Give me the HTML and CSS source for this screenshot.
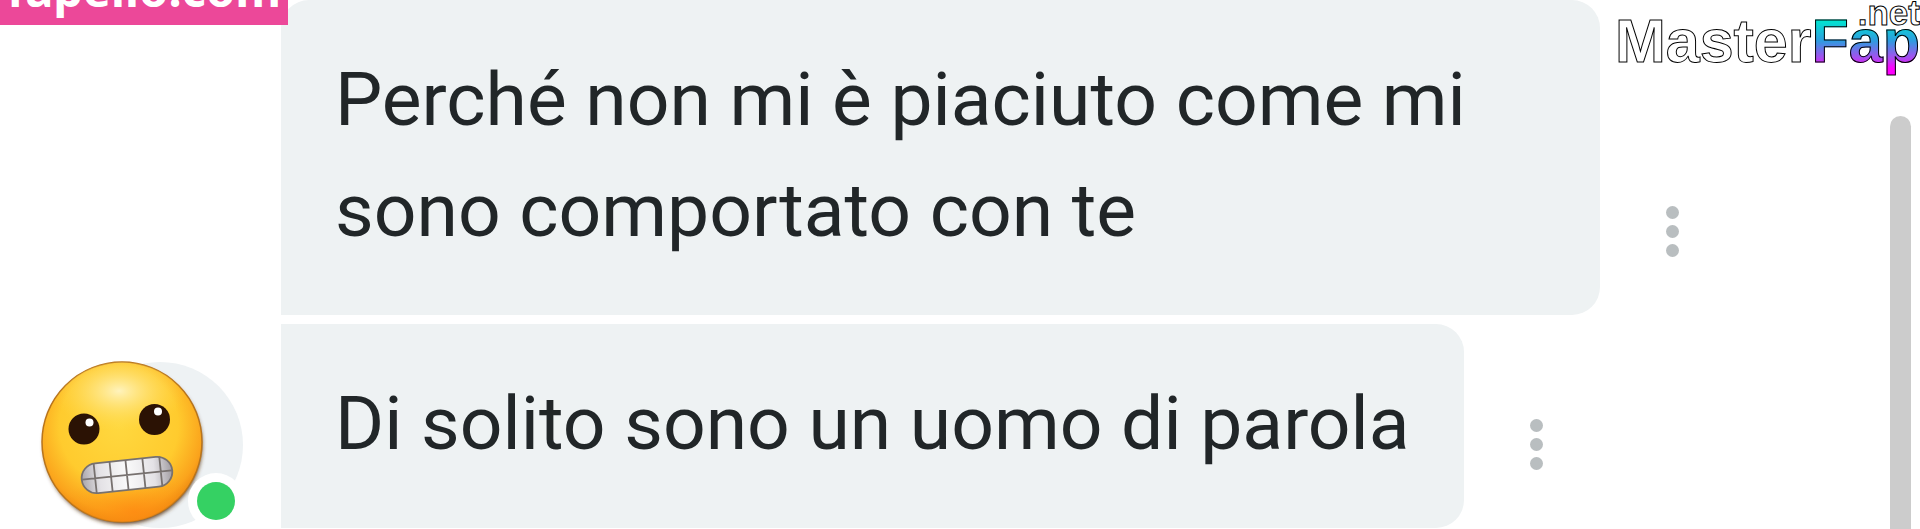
FILE: index.html
```html
<!DOCTYPE html>
<html lang="it">
<head>
  <meta charset="UTF-8">
  <title>Chat</title>
  <link rel="stylesheet" href="styles.css">
</head>
<body>
  <main class="chat">
    <div class="conversation">
      <div class="avatar">
        <svg viewBox="36 353 212 174" width="212" height="174" role="img" aria-label="Online">
          <defs>
            <radialGradient id="face" cx="0.48" cy="0.4" r="0.62">
              <stop offset="0" stop-color="#ffd83f"/>
              <stop offset="0.6" stop-color="#ffcb2e"/>
              <stop offset="0.85" stop-color="#fba41c"/>
              <stop offset="1" stop-color="#e87c0c"/>
            </radialGradient>
            <radialGradient id="shine">
              <stop offset="0" stop-color="#fff3bd"/>
              <stop offset="1" stop-color="#ffdc50" stop-opacity="0"/>
            </radialGradient>
            <radialGradient id="glow">
              <stop offset="0" stop-color="#ff8a12" stop-opacity="0.8"/>
              <stop offset="1" stop-color="#ff9a12" stop-opacity="0"/>
            </radialGradient>
            <linearGradient id="teeth">
              <stop offset="0" stop-color="#aaa6ab"/>
              <stop offset="0.2" stop-color="#e4e2e6"/>
              <stop offset="0.5" stop-color="#fafafa"/>
              <stop offset="0.8" stop-color="#e4e2e6"/>
              <stop offset="1" stop-color="#a19da2"/>
            </linearGradient>
            <filter id="soft" x="-20%" y="-20%" width="140%" height="140%">
              <feGaussianBlur stdDeviation="2"/>
            </filter>
            <clipPath id="head"><circle cx="122" cy="441" r="80"/></clipPath>
          </defs>
          <circle cx="160" cy="444" r="83" fill="#eef2f4"/>
          <circle cx="123" cy="444" r="79" fill="#5b3a1c" filter="url(#soft)"/>
          <circle cx="122" cy="441" r="80" fill="url(#face)" stroke="#b8741c" stroke-width="1.5"/>
          <g clip-path="url(#head)">
            <ellipse cx="134" cy="511" rx="75" ry="38" fill="url(#glow)"/>
            <ellipse cx="119" cy="390" rx="66" ry="40" fill="url(#shine)"/>
          </g>
          <g fill="#2b1204">
            <circle cx="84" cy="428" r="15.5"/>
            <circle cx="154.500" cy="418.500" r="15.5"/>
          </g>
          <g fill="#fff">
            <circle cx="89.500" cy="421.500" r="4"/>
            <circle cx="158" cy="410.500" r="4"/>
          </g>
          <!-- clenched teeth -->
          <g transform="rotate(-6 127 474)" stroke="#77716f" stroke-width="1.8">
            <rect x="81.500" y="459" width="91" height="30" rx="15" fill="url(#teeth)"/>
            <path d="M82 474H172M95 459V489M111 459V489M127 459V489M144 459V489M161 459V489" fill="none"/>
          </g>
          <circle cx="216" cy="500" r="28" fill="#fff"/>
          <circle cx="216" cy="500" r="19" fill="#35d163"/>
        </svg>
      </div>

      <div class="messages">
        <div class="message">
          <p class="bubble bubble-first">Perché non mi è piaciuto come mi sono comportato con te</p>
          <button type="button" class="more" aria-label="Altro">
            <span class="dot"></span><span class="dot"></span><span class="dot"></span>
          </button>
        </div>
        <div class="message">
          <p class="bubble">Di solito sono un uomo di parola</p>
          <button type="button" class="more" aria-label="Altro">
            <span class="dot"></span><span class="dot"></span><span class="dot"></span>
          </button>
        </div>
      </div>
    </div>

    <div class="scrollbar"><div class="thumb"></div></div>
  </main>

  <div class="tag"><span>fapello.com</span></div>

  <div class="logo">
    <span class="logo-name">Master<span class="logo-accent">Fap</span></span>
    <span class="logo-net">.net</span>
  </div>
</body>
</html>
```

FILE: styles.css
```css
* { box-sizing: border-box; }
body {
  margin: 0;
  background: #fff;
  color: #212628;
  font-family: Roboto, "Liberation Sans", sans-serif;
  overflow: hidden;
}

.chat {
  display: flex;
  height: 100vh;
}
.conversation {
  display: flex;
  align-items: flex-end;
  align-self: flex-start;
  flex: 1;
  min-width: 0;
}

/* Avatar beside the last message */
.avatar {
  flex: 0 0 281px;
  padding-left: 36px;
}
.avatar svg { display: block; }

/* Messages */
.messages {
  display: flex;
  flex-direction: column;
  gap: 9px;
  flex: 1;
  min-width: 0;
}
.message {
  display: flex;
  align-items: flex-end;
}
.bubble {
  margin: 0;
  max-width: 82%;
  padding: 44px 54px 49px;
  border-radius: 0 28px 28px 0;
  background: #eef2f3;
  font-size: 75px;
  line-height: 111px;
}
.bubble-first { border-top-left-radius: 28px; }

.more {
  display: flex;
  flex-direction: column;
  align-items: center;
  gap: 6px;
  margin: 0 0 48px 48px;
  padding: 10px 18px;
  border: none;
  background: none;
  cursor: pointer;
}
.dot {
  width: 13px;
  height: 13px;
  border-radius: 50%;
  background: #b9bec0;
}

/* Scrollbar */
.scrollbar {
  flex: 0 0 30px;
  padding-top: 116px;
  overflow: hidden;
}
.thumb {
  width: 21px;
  height: 100vh;
  border-radius: 11px;
  background: #ccc;
}

/* Corner tag */
.tag {
  position: absolute;
  top: 0;
  left: 0;
  display: flex;
  align-items: flex-end;
  height: 25px;
  padding: 0 7px;
  overflow: hidden;
  background: #ec4899;
  color: #fff;
  font: bold 47px/72px "Noto Sans", "Open Sans", sans-serif;
}

/* Logo */
.logo {
  position: absolute;
  top: 0;
  right: 0;
  color: #fff;
  font-family: "Liberation Sans", Arial, sans-serif;
  font-weight: bold;
  -webkit-text-stroke: 1px #000;
}
.logo-name {
  display: block;
  padding-top: 7px;
  font-size: 61px;
  line-height: 68px;
}
.logo-accent {
  background: linear-gradient(#00e5d0 20%, #2f9be0 50%, #a94df0 75%, #f0f 90%);
  -webkit-background-clip: text;
  background-clip: text;
  color: transparent;
}
.logo-net {
  position: absolute;
  top: 0;
  right: 0;
  font-size: 35px;
  line-height: 26px;
}
```
